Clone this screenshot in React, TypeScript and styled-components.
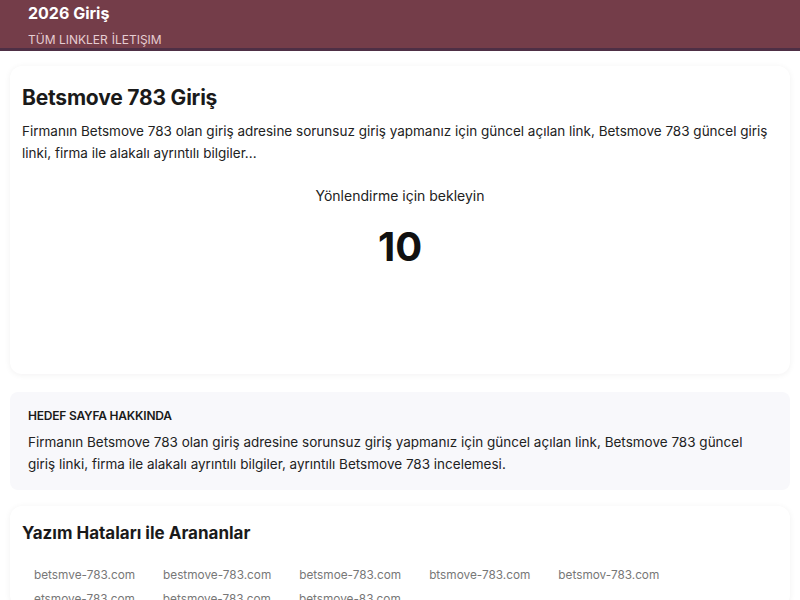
import React from "react";
import styled, { createGlobalStyle } from "styled-components";

const Global = createGlobalStyle`
  * { box-sizing: border-box; }
  body {
    margin: 0;
    background: #ffffff;
    font-family: Inter, "Noto Sans", sans-serif;
    color: #1a1a1a;
  }
`;

const Header = styled.header`
  background: #743d49;
  border-bottom: 3px solid #4e2f45;
  padding: 3px 28px 3px;
  height: 51px;
  display: flex;
  flex-direction: column;
`;

const Brand = styled.div`
  color: #ffffff;
  font-weight: 700;
  font-size: 16px;
  line-height: 20px;
`;

const Nav = styled.nav`
  margin-top: 9px;
  display: flex;
  gap: 4px;
  color: #e6cdd2;
  font-size: 12px;
  line-height: 16px;
`;

const Main = styled.main`
  padding: 15px 10px 0;
  display: flex;
  flex-direction: column;
`;

const Card = styled.section<{ $height?: number; $top?: number; $pad?: number }>`
  background: #ffffff;
  border-radius: 12px;
  box-shadow: 0 1px 6px rgba(30, 20, 40, 0.06);
  padding: ${(p) => p.$pad ?? 18}px 12px 0;
  margin-top: ${(p) => p.$top ?? 0}px;
  ${(p) => (p.$height ? `height: ${p.$height}px;` : "")}
`;

const Title = styled.h1`
  margin: 0;
  font-size: 21px;
  font-weight: 700;
  line-height: 28px;
  letter-spacing: -0.2px;
`;

const Para = styled.p`
  margin: 8px 0 0;
  font-size: 13.5px;
  line-height: 22px;
  color: #222;
`;

const Redirect = styled.div`
  display: flex;
  flex-direction: column;
  align-items: center;
  margin-top: 22px;
`;

const Wait = styled.div`
  font-size: 14px;
  line-height: 20px;
  color: #222;
`;

const Count = styled.div`
  margin-top: 17px;
  font-size: 40px;
  font-weight: 700;
  line-height: 48px;
  color: #111;
`;

const InfoBox = styled.section`
  margin-top: 18px;
  background: #f8f8fb;
  border-radius: 8px;
  padding: 15px 18px 15px;
`;

const InfoLabel = styled.div`
  font-size: 12px;
  font-weight: 600;
  line-height: 18px;
  letter-spacing: -0.2px;
  color: #1a1a1a;
`;

const InfoPara = styled.p`
  margin: 6px 0 0;
  font-size: 13.5px;
  line-height: 22px;
  color: #222;
`;

const SubTitle = styled.h2`
  margin: 0;
  font-size: 17px;
  font-weight: 700;
  line-height: 24px;
`;

const Links = styled.div`
  display: flex;
  flex-wrap: wrap;
  column-gap: 28px;
  row-gap: 8px;
  padding: 22px 12px 0;
`;

const LinkItem = styled.a`
  font-size: 11.8px;
  line-height: 16px;
  color: #777;
  text-decoration: none;
`;

const links = [
  "betsmve-783.com",
  "bestmove-783.com",
  "betsmoe-783.com",
  "btsmove-783.com",
  "betsmov-783.com",
  "etsmove-783.com",
  "betsmove-783.com",
  "betsmove-83.com",
];

export default function App() {
  return (
    <>
      <Global />
      <Header>
        <Brand>2026 Giriş</Brand>
        <Nav>
          <span>TÜM LINKLER</span>
          <span>İLETIŞIM</span>
        </Nav>
      </Header>
      <Main>
        <Card $height={308}>
          <Title>Betsmove 783 Giriş</Title>
          <Para>
            Firmanın Betsmove 783 olan giriş adresine sorunsuz giriş yapmanız için güncel açılan link,
            Betsmove 783 güncel giriş linki, firma ile alakalı ayrıntılı bilgiler...
          </Para>
          <Redirect>
            <Wait>Yönlendirme için bekleyin</Wait>
            <Count>10</Count>
          </Redirect>
        </Card>
        <InfoBox>
          <InfoLabel>HEDEF SAYFA HAKKINDA</InfoLabel>
          <InfoPara>
            Firmanın Betsmove 783 olan giriş adresine sorunsuz giriş yapmanız için güncel açılan link,
            Betsmove 783 güncel giriş linki, firma ile alakalı ayrıntılı bilgiler, ayrıntılı Betsmove 783
            incelemesi.
          </InfoPara>
        </InfoBox>
        <Card $top={16} $pad={15}>
          <SubTitle>Yazım Hataları ile Arananlar</SubTitle>
          <Links>
            {links.map((l) => (
              <LinkItem key={l}>{l}</LinkItem>
            ))}
          </Links>
        </Card>
      </Main>
    </>
  );
}
